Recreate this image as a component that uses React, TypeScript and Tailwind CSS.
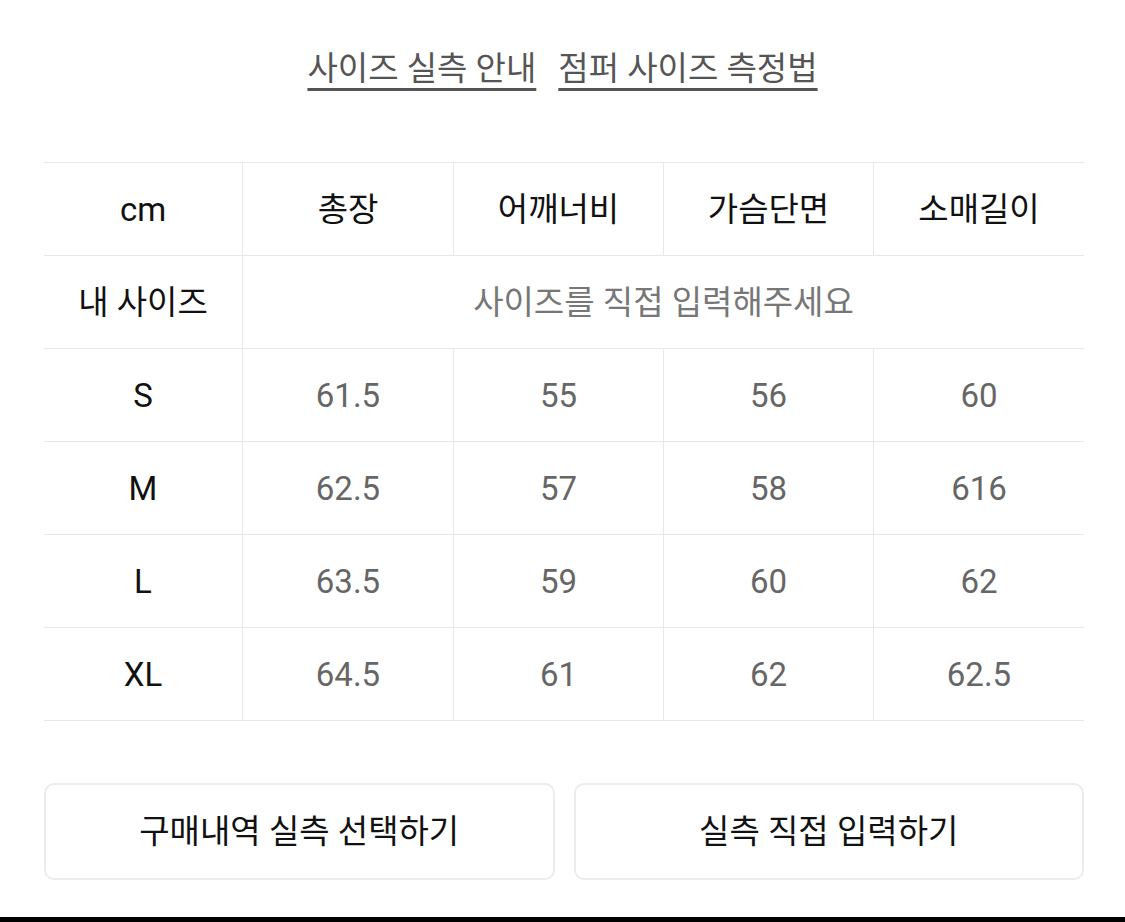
import React from "react";

const FONT = { fontFamily: 'Roboto, "Noto Sans CJK KR", "Noto Sans", sans-serif' };

const rows: [string, string[]][] = [
  ["S", ["61.5", "55", "56", "60"]],
  ["M", ["62.5", "57", "58", "616"]],
  ["L", ["63.5", "59", "60", "62"]],
  ["XL", ["64.5", "61", "62", "62.5"]],
];

const heads = ["총장", "어깨너비", "가슴단면", "소매길이"];

export default function App() {
  return (
    <div className="w-[1125px] h-[922px] bg-white flex flex-col text-[33px] leading-none" style={FONT}>
      <div className="flex justify-center gap-[22px] pt-[52px] h-[162px] text-[#555555]">
        <span className="underline decoration-[3px] underline-offset-[8px] decoration-[#555555]">사이즈 실측 안내</span>
        <span className="underline decoration-[3px] underline-offset-[8px] decoration-[#555555]">점퍼 사이즈 측정법</span>
      </div>
      <div className="mx-[44px] w-[1040px] grid grid-cols-[198px_211px_210px_210px_211px] border-b border-[#e8e8e8]">
        <div className="h-[93px] border-t border-[#e8e8e8] flex items-center justify-center text-[#111111]">cm</div>
        {heads.map((h) => (
          <div key={h} className="h-[93px] border-t border-l border-[#e8e8e8] flex items-center justify-center text-[#111111]">
            {h}
          </div>
        ))}
        <div className="h-[93px] border-t border-[#e8e8e8] flex items-center justify-center text-[#111111]">내 사이즈</div>
        <div className="col-span-4 h-[93px] border-t border-l border-[#e8e8e8] flex items-center justify-center text-[#777777]">
          사이즈를 직접 입력해주세요
        </div>
        {rows.map(([size, vals]) => (
          <React.Fragment key={size}>
            <div className="h-[93px] border-t border-[#e8e8e8] flex items-center justify-center text-[#111111]">{size}</div>
            {vals.map((v, i) => (
              <div key={i} className="h-[93px] border-t border-l border-[#e8e8e8] flex items-center justify-center text-[#666666]">
                {v}
              </div>
            ))}
          </React.Fragment>
        ))}
      </div>
      <div className="mx-[44px] w-[1040px] mt-[62px] grid grid-cols-2 gap-[19px]">
        <button className="h-[97px] border-2 border-[#ececec] rounded-[10px] flex items-center justify-center text-[#111111]">
          구매내역 실측 선택하기
        </button>
        <button className="h-[97px] border-2 border-[#ececec] rounded-[10px] flex items-center justify-center text-[#111111]">
          실측 직접 입력하기
        </button>
      </div>
      <div className="flex-1" />
      <div className="h-[5px] bg-black" />
    </div>
  );
}
